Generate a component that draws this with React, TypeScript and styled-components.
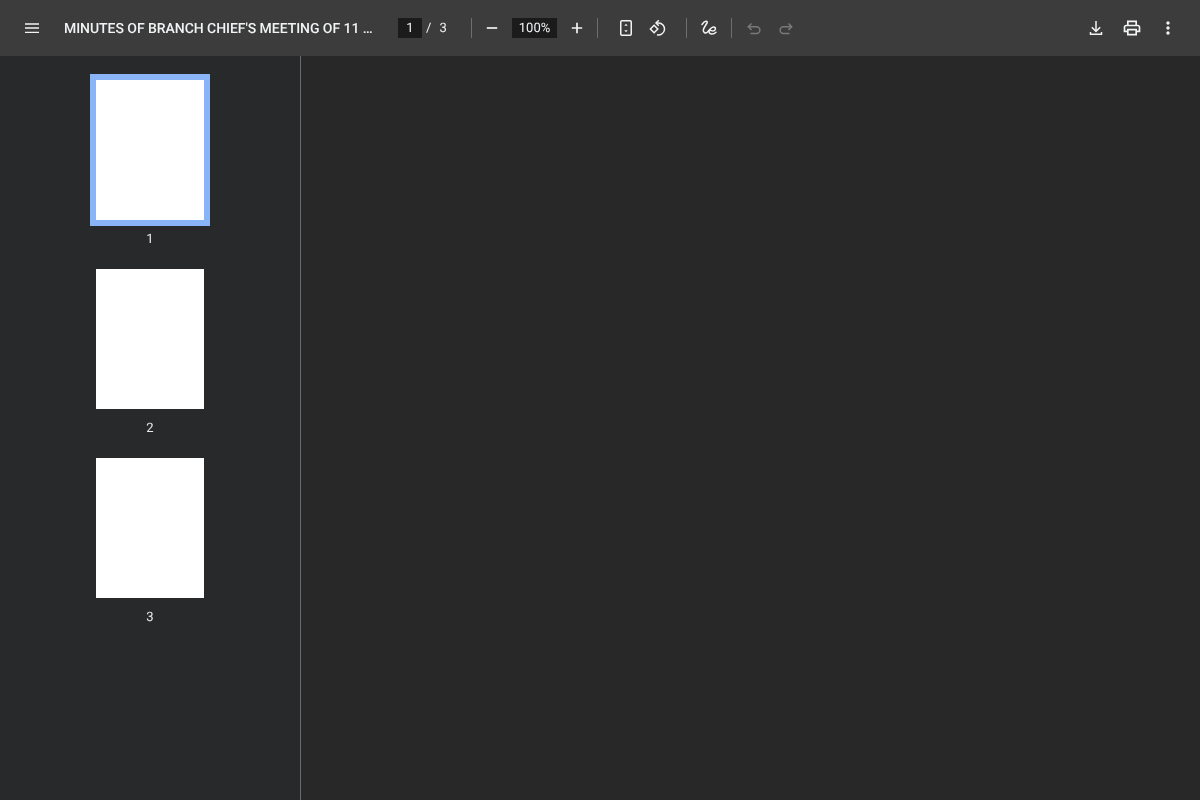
import React from 'react'
import styled, { createGlobalStyle } from 'styled-components'

const GlobalStyle = createGlobalStyle`
  html, body {
    margin: 0;
    height: 100%;
    overflow: hidden;
    background: #282828;
    font-family: Roboto, 'Liberation Sans', sans-serif;
    text-rendering: geometricPrecision;
  }
`

const Page = styled.div`
  display: flex;
  flex-direction: column;
  width: 1200px;
  height: 800px;
  will-change: transform;
`

const Toolbar = styled.header`
  display: flex;
  align-items: center;
  flex: none;
  height: 56px;
  padding: 0 14px;
  background: #3c3c3c;
  color: #f1f3f4;
`

const IconButton = styled.button<{ $size?: number; $disabled?: boolean }>`
  display: flex;
  align-items: center;
  justify-content: center;
  flex: none;
  width: ${p => p.$size ?? 32}px;
  height: 32px;
  padding: 0;
  border: 0;
  background: none;
  color: ${p => (p.$disabled ? '#797979' : '#f1f3f4')};
`

const Title = styled.div`
  flex: none;
  width: 312px;
  margin: 0 22px 0 14px;
  padding-top: 1px;
  font-size: 14px;
  font-weight: 500;
  letter-spacing: -0.05px;
  white-space: nowrap;
  overflow: hidden;
`

const NumberBox = styled.div<{ $width: number; $gap?: number }>`
  flex: none;
  width: ${p => p.$width}px;
  height: 20px;
  margin: 0 ${p => p.$gap ?? 0}px;
  line-height: 21px;
  text-align: center;
  font-size: 13px;
  background: #1b1b1b;
  color: #f1f3f4;
`

const PageCount = styled.div`
  display: flex;
  flex: none;
  width: 49px;
  font-size: 13px;
  color: #f1f3f4;
  span:first-child {
    margin: 0 8px 0 4px;
  }
`

const Separator = styled.div<{ $left?: number; $right?: number }>`
  flex: none;
  width: 1px;
  height: 20px;
  margin: 0 ${p => p.$right ?? 0}px 0 ${p => p.$left ?? 0}px;
  background: #6e6e6e;
`

const Group = styled.div`
  display: flex;
  align-items: center;
  flex: none;
`

const Spacer = styled.div`
  flex: 1;
`

const Body = styled.main`
  display: flex;
  flex: 1;
  min-height: 0;
`

const Sidebar = styled.nav`
  display: flex;
  flex-direction: column;
  align-items: center;
  flex: none;
  box-sizing: border-box;
  width: 301px;
  padding-top: 18px;
  gap: 16px;
  background: #28292a;
  border-right: 1px solid #6b6b6b;
`

const Thumb = styled.div`
  display: flex;
  flex-direction: column;
  align-items: center;
  flex: none;
`

const Frame = styled.div<{ $active?: boolean }>`
  flex: none;
  box-sizing: border-box;
  width: 120px;
  height: 152px;
  border: 6px solid ${p => (p.$active ? '#8ab4f8' : 'transparent')};
  background: #fff;
  background-clip: padding-box;
`

const PageLabel = styled.div`
  margin-top: 6px;
  font-size: 13px;
  line-height: 15px;
  color: #e8eaed;
`

const Viewer = styled.section`
  flex: 1;
  background: #282828;
`

const Icon = styled.svg.attrs({ width: 20, height: 20, viewBox: '0 0 24 24' })`
  display: block;
  fill: currentColor;
`

const StrokeIcon = styled.svg.attrs({ width: 20, height: 20, viewBox: '0 0 20 20' })`
  display: block;
  fill: none;
  stroke: currentColor;
  stroke-width: 1.5;
`

const pages = [1, 2, 3]

export default function App() {
  return (
    <Page>
      <GlobalStyle />
      <Toolbar>
        <IconButton $size={36}>
          <StrokeIcon>
            <path d="M3 6h14M3 10h14M3 14.300h14" strokeWidth="1.300" />
          </StrokeIcon>
        </IconButton>
        <Title>MINUTES OF BRANCH CHIEF'S MEETING OF 11 …</Title>
        <NumberBox $width={24}>1</NumberBox>
        <PageCount><span>/</span><span>3</span></PageCount>
        <Separator $right={4} />
        <IconButton>
          <StrokeIcon><path d="M4.800 10h10.400" strokeWidth="1.700" /></StrokeIcon>
        </IconButton>
        <NumberBox $width={45} $gap={4}>100%</NumberBox>
        <IconButton>
          <StrokeIcon><path d="M4.800 10h10.400M10 4.800v10.400" strokeWidth="1.700" /></StrokeIcon>
        </IconButton>
        <Separator $left={4} $right={12} />
        <IconButton>
          <StrokeIcon>
            <rect x="4.750" y="2.750" width="10.500" height="14.500" rx="1.200" />
            <path d="M10 5.800l1.700 2H8.300zM10 14.200l-1.700-2h3.400z" fill="currentColor" stroke="none" />
          </StrokeIcon>
        </IconButton>
        <IconButton>
          <StrokeIcon>
            <path d="M2.400 11l3.700-3.700 3.700 3.700-3.700 3.700z" />
            <path d="M8 5h2.500a6 6 0 1 1-1.500 11.800" />
            <path d="M10.800 2.200L8 5l2.800 2.800" />
          </StrokeIcon>
        </IconButton>
        <Separator $left={12} $right={6} />
        <IconButton>
          <StrokeIcon>
            <path d="M3 6.500C4.500 4 6.500 2.700 8 3.500C9.500 4.500 4.500 9 4.300 12C4.200 15 6.500 15.800 8.500 14C10 12.500 12.500 8.600 15 9C17.200 9.500 16.800 13 14 13C12.500 13 11.500 11.800 10.500 12.500C9.500 13.500 10.300 15.800 12.500 16C14.500 16.200 16 15.300 17 14.300" strokeLinecap="round" />
          </StrokeIcon>
        </IconButton>
        <Separator $left={6} $right={6} />
        <IconButton $disabled>
          <StrokeIcon>
            <path d="M4.500 8.700h8a3.400 3.400 0 0 1 0 6.800H6.500" />
            <path d="M7.500 5.500L4.300 8.700l3.200 3.200" />
          </StrokeIcon>
        </IconButton>
        <IconButton $disabled>
          <StrokeIcon>
            <path d="M15.500 8.700h-8a3.400 3.400 0 0 0 0 6.800h6" />
            <path d="M12.500 5.500L15.700 8.700l-3.200 3.200" />
          </StrokeIcon>
        </IconButton>
        <Spacer />
        <Group>
          <IconButton $size={36}>
            <StrokeIcon>
              <path d="M10 3v10" />
              <path d="M5.800 9.200L10 13.400l4.200-4.200" />
              <path d="M4.500 14v2.300h11V14" />
            </StrokeIcon>
          </IconButton>
          <IconButton $size={36}>
            <Icon><path d="M19 8h-1V3H6v5H5c-1.660 0-3 1.340-3 3v6h4v4h12v-4h4v-6c0-1.660-1.340-3-3-3zM8 5h8v3H8V5zm8 12v2H8v-4h8v2zm2-2v-2H6v2H4v-4c0-.55.45-1 1-1h14c.55 0 1 .45 1 1v4h-2z" /></Icon>
          </IconButton>
          <IconButton $size={36}>
            <Icon><path d="M12 8c1.100 0 2-.9 2-2s-.9-2-2-2-2 .9-2 2 .9 2 2 2zm0 2c-1.100 0-2 .9-2 2s.9 2 2 2 2-.9 2-2-.9-2-2-2zm0 6c-1.100 0-2 .9-2 2s.9 2 2 2 2-.9 2-2-.9-2-2-2z" /></Icon>
          </IconButton>
        </Group>
      </Toolbar>
      <Body>
        <Sidebar>
          {pages.map(n => (
            <Thumb key={n}>
              <Frame $active={n === 1} />
              <PageLabel>{n}</PageLabel>
            </Thumb>
          ))}
        </Sidebar>
        <Viewer />
      </Body>
    </Page>
  )
}
